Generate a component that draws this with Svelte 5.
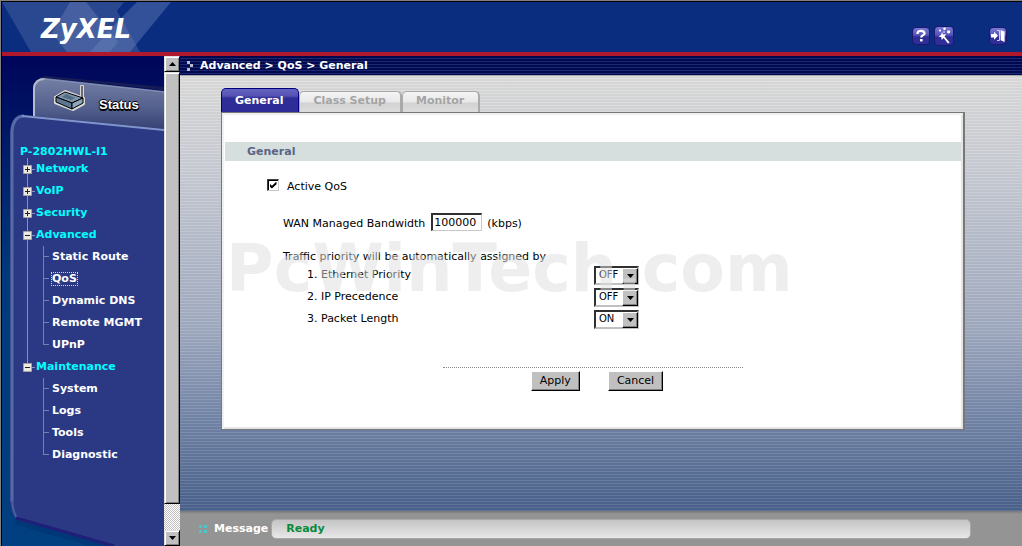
<script lang="ts">
  type Section = { name: string; open: boolean; items: string[] };

  let sections: Section[] = $state([
    { name: 'Network', open: false, items: [] },
    { name: 'VoIP', open: false, items: [] },
    { name: 'Security', open: false, items: [] },
    { name: 'Advanced', open: true, items: ['Static Route', 'QoS', 'Dynamic DNS', 'Remote MGMT', 'UPnP'] },
    { name: 'Maintenance', open: true, items: ['System', 'Logs', 'Tools', 'Diagnostic'] },
  ]);
  const tabs = ['General', 'Class Setup', 'Monitor'];

  let current = $state('QoS');
  let tab = $state('General');
  let active = $state(true);
  let bandwidth = $state('100000');
  let rules = $state([
    { id: 'eth', name: 'Ethernet Priority', value: 'OFF' },
    { id: 'ip', name: 'IP Precedence', value: 'OFF' },
    { id: 'len', name: 'Packet Length', value: 'ON' },
  ]);
</script>

<div class="page">
  <header>
    <svg class="facets" width="180" height="50" viewBox="0 0 180 50" aria-hidden="true">
      <path d="M0 0H122L115 9L138 50H29Z" fill="#2a4890" />
      <path d="M68 0H84L116 40L108 50H65L50 31Z" fill="#455fa0" />
      <path d="M135 0H169L128 50H88L115 20Z" fill="#6f86bd" opacity=".4" />
    </svg>
    <h1>ZyXEL</h1>
    <div class="tools">
      <button class="tool" aria-label="Help">
        <svg width="16" height="16" viewBox="1 1 16 16">
          <path d="M5.6 7V5.6Q6 3.8 9 3.8T12.6 6.2Q12.6 7.8 10.6 8.6Q9.2 9.2 9.2 10.6" fill="none" stroke="#fff" stroke-width="2.2" />
          <rect x="8" y="12" width="2.6" height="2.4" fill="#fff" />
        </svg>
      </button>
      <button class="tool big" aria-label="Wizard">
        <svg width="18" height="18" viewBox="1 1 18 18" fill="#fff">
          <path d="M8 6L9 8.6L12 8L10.6 10.4L15.6 16.4L14 17.6L9.6 12L7.6 14L7.4 11.2L4.4 10.4L7 9Z" />
          <circle cx="6" cy="4.6" r="1.1" /><circle cx="10.5" cy="2.8" r="1.3" /><circle cx="14.6" cy="5.8" r="1.6" /><circle cx="10" cy="6" r=".8" />
        </svg>
      </button>
      <button class="tool exit" aria-label="Logout">
        <svg width="16" height="16" viewBox="1 1 16 16" fill="#fff">
          <path d="M2 7H5V4.8L9 8.8L5 12.8V10.6H2Z" />
          <path d="M8 3.5H10.5V13.5H8" fill="none" stroke="#cfcff4" />
          <path d="M11.6 3L15.6 4.6V15L11.6 13.2Z" />
        </svg>
      </button>
    </div>
  </header>

  <div class="body">
    <nav>
      <svg class="shell" width="162" height="490" viewBox="0 0 162 490" aria-hidden="true">
        <defs>
          <linearGradient id="tabfill" x1="0" y1="0" x2="0" y2="1">
            <stop offset="0" stop-color="#7480a4" /><stop offset=".6" stop-color="#525e8c" /><stop offset="1" stop-color="#353f74" />
          </linearGradient>
        </defs>
        <path d="M31 70V32Q33 22 46 22L162 34V31L44 20Q35 20 31 32Z" fill="#1e2550" opacity=".7" />
        <path d="M31 64V32Q32 22 43 22L162 35V74Z" fill="url(#tabfill)" />
        <path d="M32 62V32Q33 23 43 23" fill="none" stroke="#b4bccd" stroke-width="2" />
        <path d="M41 23L162 36" stroke="#8390b4" fill="none" />
        <path d="M14 464L112 492" stroke="#002f70" stroke-width="9" opacity=".5" fill="none" />
        <path d="M8 76Q9 59 22 59L162 73V490H112L18 465Q8 460 8 446Z" fill="#2b3984" />
        <path d="M10 446V76Q11 60 22 60" fill="none" stroke="#566ba6" stroke-width="3" />
        <path d="M20 60L162 74" stroke="#8095ca" stroke-width="2" fill="none" />
        <path d="M10 444Q11 458 16 463" fill="none" stroke="#4a60a0" stroke-width="2" />
        <path d="M14 462L112 490" stroke="#1d1f78" stroke-width="3" fill="none" />
      </svg>

      <a class="status" href="#status">
        <svg width="34" height="27" viewBox="0 0 34 27" aria-hidden="true">
          <path d="M2 12L12 6L31 13V19L20 25L2 18ZM28 14V1H30V14" fill="#b9c3cf" stroke="#d8d8d8" stroke-width="2" stroke-linejoin="round" />
          <path d="M3 12L12 7L30 13L19 18Z" fill="#7e95ac" stroke="#000" />
          <path d="M3 12L19 18V24L3 17Z" fill="#5d7692" stroke="#000" />
          <path d="M19 18L30 13V18L19 24Z" fill="#8ca5b9" stroke="#000" />
          <path d="M9 12L13 9L22 13L18 15Z" fill="#526b86" />
          <path d="M29 14V1" stroke="#000" />
        </svg>
        <span>Status</span>
      </a>

      <div class="tree">
        <strong>P-2802HWL-I1</strong>
        <ul class="sections">
          {#each sections as s}
            <li>
              <button class="node" onclick={() => (s.open = !s.open)}>
                <svg width="13" height="9" viewBox="0 0 13 9" aria-hidden="true">
                  <path d="M9 4.5H12" stroke="#8891b8" />
                  <path d="M.5 .5H8.5V8.5H.5Z" fill="#ece9e0" stroke="#a5a39c" />
                  <path d={s.open ? 'M2 4.5H7' : 'M2 4.5H7M4.5 2V7'} stroke="#222" />
                </svg>
                {s.name}
              </button>
              {#if s.open && s.items.length}
                <ul class="items">
                  {#each s.items as item}
                    <li><a class:current={item === current} href="#{item}" onclick={() => (current = item)}>{item}</a></li>
                  {/each}
                </ul>
              {/if}
            </li>
          {/each}
        </ul>
      </div>
    </nav>

    <div class="scroll">
      <button class="arrow" aria-label="Scroll up"><svg width="7" height="4"><path d="M0 4L3.5 0L7 4Z" /></svg></button>
      <div class="thumb"></div>
      <div class="track"></div>
      <button class="arrow" aria-label="Scroll down"><svg width="7" height="4"><path d="M0 0L3.5 4L7 0Z" /></svg></button>
    </div>

    <main>
      <div class="crumb">
        <svg width="7" height="10" viewBox="0 0 7 10" fill="#b9bcc8" aria-hidden="true"><path d="M0 0H3V3H0ZM3 3H6V6H3ZM0 7H3V10H0Z" /></svg>
        Advanced &gt; QoS &gt; General
      </div>

      <div class="content">
        <div class="tabs">
          {#each tabs as t}
            <button class="tab" class:on={t === tab} onclick={() => (tab = t)}>{t}</button>
          {/each}
        </div>
        <form class="panel" onsubmit={(e) => e.preventDefault()}>
          <h2>General</h2>
          <div class="check">
            <input id="active" type="checkbox" bind:checked={active} />
            <label for="active">Active QoS</label>
          </div>
          <div class="band">
            <label for="bw">WAN Managed Bandwidth</label>
            <input id="bw" type="text" bind:value={bandwidth} />
            <span>(kbps)</span>
          </div>
          <p>Traffic priority will be automatically assigned by</p>
          {#each rules as r, i}
            <div class="rule">
              <label for={r.id}>{i + 1}. {r.name}</label>
              <span class="pick">
                <select id={r.id} bind:value={r.value}><option>OFF</option><option>ON</option></select>
                <span class="drop"><svg width="7" height="4"><path d="M0 0L3.5 4L7 0Z" /></svg></span>
              </span>
            </div>
          {/each}
          <div class="line"></div>
          <div class="actions">
            <button type="submit">Apply</button>
            <button type="reset">Cancel</button>
          </div>
          <div class="mark" aria-hidden="true">PcWinTech.com</div>
        </form>
      </div>

      <footer>
        <svg width="9" height="8" viewBox="0 0 9 8" fill="#4cc6cc" aria-hidden="true"><path d="M0 0H3V3H0ZM5 0H8V3H5ZM0 5H3V8H0ZM5 5H8V8H5Z" /></svg>
        <span>Message</span>
        <output>Ready</output>
      </footer>
    </main>
  </div>
</div>

<style>
  :global(body) { margin:0; }
  .page { box-sizing:border-box; min-height:100vh; display:flex; flex-direction:column; border:1px solid #808080; border-width:1px 0 0 1px; box-shadow:inset 1px 1px #000; padding:1px 0 0 1px; font-family:"DejaVu Sans", Verdana, sans-serif; font-size:11px; line-height:14px; color:#000; }
  button, input, select { font:inherit; margin:0; padding:0; box-sizing:border-box; border-radius:0; }
  ul { list-style:none; margin:0; padding:0; }
  a { color:inherit; text-decoration:none; }

  header { position:relative; height:50px; display:flex; justify-content:space-between; background:#0b2d80; border-bottom:4px solid #b0182e; }
  .facets { position:absolute; left:0; top:0; }
  h1 { position:relative; margin:10px 0 0 39px; font:italic bold 26px/34px "DejaVu Sans", Verdana, sans-serif; color:#fff; }
  .tools { display:flex; align-items:center; gap:4px; padding:18px 15px 0 0; }
  .tool { width:18px; height:18px; border:1px solid #1c1870; border-radius:4px; background:linear-gradient(#7a79d4, #5653b8 45%, #2e2c96 55%, #302e98); display:grid; place-items:center; }
  .tool.big { width:20px; height:20px; }
  .tool.exit { margin-left:31px; }

  .body { flex:1; display:flex; }
  nav { position:relative; width:162px; flex:none; background:linear-gradient(#00055a, #003a7c 45%, #003f80); overflow:hidden; }
  .shell { position:absolute; left:0; top:0; }
  .status { position:relative; display:flex; align-items:flex-end; gap:12px; margin:29px 0 0 51px; color:#fff; }
  .status span { font:bold 13px/14px "Liberation Sans", Arial, sans-serif; text-shadow:1px 1px #000, -1px 0 #000, 0 -1px #000, 0 2px #000; }
  .tree { position:relative; margin:33px 0 0 18px; color:#0ff; font-weight:bold; }
  .tree strong { display:block; line-height:13px; }
  .sections { margin-left:3px; }
  .sections > li { background:linear-gradient(#8891b8, #8891b8) 4px 0 / 1px 100% no-repeat; }
  .sections > li:last-child { background-size:1px 11px; }
  .node { display:flex; align-items:center; width:100%; height:22px; border:0; background:none; color:inherit; font-weight:bold; text-align:left; }
  .items { margin-left:20px; color:#fff; }
  .items li { height:22px; display:flex; align-items:center; background:linear-gradient(#7580b0, #7580b0) 0 10px / 6px 1px no-repeat, linear-gradient(#7580b0, #7580b0) 0 0 / 1px 100% no-repeat; padding-left:9px; }
  .items li:last-child { background-size:6px 1px, 1px 11px; }
  .current { outline:1px dotted #e8d9a8; line-height:12px; }

  .scroll { width:16px; flex:none; display:flex; flex-direction:column; }
  .arrow, .thumb { box-sizing:border-box; background:#c0c0c0; border:1px solid #000; border-color:#dfdfdf #000 #000 #dfdfdf; box-shadow:inset 1px 1px #fff, inset -1px -1px #808080; }
  .arrow { height:16px; display:grid; place-items:center; }
  .thumb { flex:432; }
  .track { flex:26; background:repeating-conic-gradient(#fff 0 25%, #c0c0c0 0 50%) 0 0 / 2px 2px; }

  main { flex:1; min-width:0; display:flex; flex-direction:column; }
  .crumb { height:19px; display:flex; align-items:center; gap:6px; padding-left:7px; color:#fff; font-weight:bold; background:repeating-linear-gradient(#000850 0 2px, #1a2a70 2px 3px); border-bottom:1px solid #a8a8a8; }
  .content { flex:1; padding:12px 57px 0 41px; background:repeating-linear-gradient(rgba(0,0,30,.03) 0 2px, rgba(255,255,255,.1) 2px 3px), linear-gradient(#dededc, #cccfd6 20%, #a2acc1 58%, #7c8dad 75%, #4a628c); }
  .tabs { display:flex; align-items:flex-end; height:24px; }
  .tab { height:21px; padding:0 14px 3px 13px; border:1px solid #aaa; border-width:1px 2px 0 1px; border-radius:5px 5px 0 0; background:linear-gradient(#f4f4f4, #e8e8e8 50%, #d2d2d2 55%, #dcdcdc); color:#a4a4a4; font-weight:bold; }
  .tab.on { height:24px; padding:0 15px 0 13px; border-width:1px 1px 0 1px; border-color:#000080; background:linear-gradient(#6664c0, #5552b4 30%, #2e2c96 40%); color:#fff; }

  .panel { position:relative; box-sizing:border-box; min-height:318px; padding:29px 2px 0 3px; background:#fff; border:1px solid #787878; border-right-width:2px; box-shadow:inset 2px 2px 1px #f0f0f0, inset -2px -2px 1px #e4e4e4; }
  h2 { margin:0; padding:3px 0 2px 22px; font-size:11px; line-height:14px; color:#5a6488; background:#d7dfde; }
  .check { display:flex; gap:8px; margin:18px 0 0 42px; }
  .check label { padding-top:1px; }
  .check input { appearance:none; width:12px; height:12px; border:1px solid; border-color:#404040 #c8c8c8 #c8c8c8 #404040; background:#fff; box-shadow:inset 1px 1px #000; display:grid; place-items:center; }
  .check input:checked::before { content:""; width:7px; height:7px; background:#000; clip-path:polygon(0 30%, 35% 62%, 100% 0, 100% 40%, 35% 100%, 0 72%); }
  .band { display:flex; align-items:center; margin:19px 0 0 58px; }
  .band input { width:51px; height:18px; margin:0 5px 0 6px; padding:0 1px; border:1px solid; border-color:#303030 #c8c8c8 #c8c8c8 #303030; border-width:2px 1px 1px 2px; background:#fff; }
  .band label, .band span { padding-top:3px; }
  p { margin:19px 0 0 58px; }
  .rule { display:flex; align-items:center; height:22px; margin-left:82px; }
  .rule label { width:287px; }
  .pick { position:relative; }
  select { appearance:none; display:block; width:45px; height:19px; padding-left:3px; border:2px solid; border-color:#303030 #c0c0c0 #c0c0c0 #303030; background:#fff; color:#000; font-size:10px; }
  .drop { position:absolute; right:1px; top:2px; bottom:1px; width:16px; box-sizing:border-box; display:grid; place-items:center; background:#c0c0c0; border:1px solid; border-color:#fff #000 #000 #fff; box-shadow:inset -1px -1px #808080; pointer-events:none; }
  .line { width:300px; margin:37px auto 0; border-top:1px dotted #888; }
  .actions { display:flex; justify-content:center; gap:28px; margin-top:3px; padding-left:8px; }
  .actions button { height:20px; padding:0 8px; border:1px solid; border-color:#fff #000 #000 #fff; background:#c0c0c0; color:#000; box-shadow:inset -1px -1px #808080; }
  .mark { position:absolute; left:4px; top:118px; font-size:65px; line-height:76px; font-weight:bold; color:rgba(222,222,222,.52); white-space:nowrap; pointer-events:none; }

  footer { display:flex; align-items:center; gap:6px; height:35px; padding-left:19px; background:linear-gradient(#777, #949494 3px); color:#fff; font-weight:bold; }
  footer output { flex:1; box-sizing:border-box; height:20px; margin:0 51px 0 -3px; padding-left:14px; border:1px solid #a8a8a8; border-radius:5px; background:linear-gradient(#c4c4c4, #e8e8e8); line-height:18px; color:#0a8a3c; }
</style>
